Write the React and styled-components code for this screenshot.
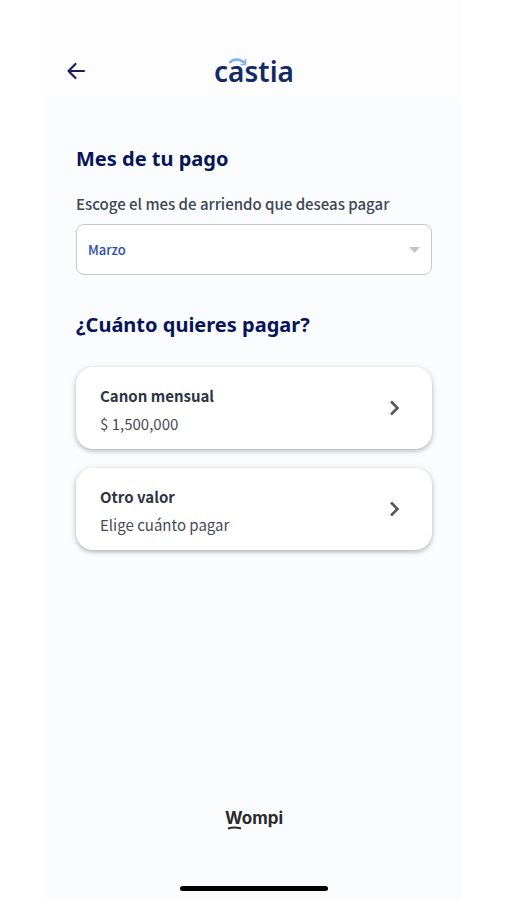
import React from "react";
import styled, { createGlobalStyle } from "styled-components";

const body = '"Noto Sans CJK SC", "Noto Sans", sans-serif';
const display = '"Noto Sans", "Open Sans", sans-serif';

const GlobalStyle = createGlobalStyle`
  *, *::before, *::after { box-sizing: border-box; }
  body { margin: 0; background: #fff; font-family: ${body}; color: #3d4756; }
`;

const Page = styled.div`
  min-height: 100vh;
  display: flex;
  padding: 0 45px 0 46px;
`;

const Screen = styled.div`
  flex: 1;
  min-width: 0;
  display: flex;
  flex-direction: column;
  background: #fafcfe;
`;

const Header = styled.header`
  display: grid;
  grid-template-columns: 40px 1fr 40px;
  align-items: center;
  padding: 44px 10px 0;
  height: 98px;
  background: #fdfdfe;
`;

const BackButton = styled.button`
  display: grid;
  place-items: center;
  width: 40px;
  height: 40px;
  padding: 0;
  border: 0;
  background: none;
  cursor: pointer;
`;

const Brand = styled.div`
  position: relative;
  justify-self: center;
  font: 600 28px/32px ${display};
  color: #142a64;
`;

const Swoosh = styled.svg`
  position: absolute;
  left: 14px;
  top: 2px;
`;

const Main = styled.main`
  flex: 1;
  display: flex;
  flex-direction: column;
  padding: 45px 30px 0;
`;

const Heading = styled.h2`
  margin: 0;
  font: 700 20px/32px ${display};
  color: #07145a;
`;

const Label = styled.label`
  margin-top: 17px;
  font-size: 15px;
  line-height: 24px;
  font-weight: 500;
`;

const SelectBox = styled.div`
  display: grid;
  align-items: center;
  margin: 8px 0 34px;
`;

const Select = styled.select`
  grid-area: 1 / 1;
  appearance: none;
  width: 100%;
  height: 51px;
  padding: 0 32px 0 11px;
  border: 1px solid #c9c9cb;
  border-radius: 8px;
  background: #fff;
  font: 500 13px/20px ${body};
  color: #2c4da8;
`;

const Caret = styled.svg`
  grid-area: 1 / 1;
  justify-self: end;
  margin-right: 12px;
  pointer-events: none;
`;

const Options = styled.div`
  display: grid;
  gap: 19px;
  margin-top: 26px;
`;

const OptionCard = styled.button`
  display: flex;
  align-items: center;
  justify-content: space-between;
  height: 82px;
  padding: 4px 30px 0 24px;
  border: 0;
  border-radius: 17px;
  background: #fff;
  box-shadow: 0 2px 4px rgba(0, 0, 0, 0.22), 0 1px 9px rgba(0, 0, 0, 0.1);
  font-family: ${body};
  text-align: left;
  color: #454c57;
  cursor: pointer;
`;

const OptionText = styled.span`
  display: grid;
  font-size: 15px;
  line-height: 28px;
`;

const OptionTitle = styled.strong`
  font-weight: 700;
  color: #2b3545;
`;

const Footer = styled.footer`
  display: flex;
  flex-direction: column;
  align-items: center;
  gap: 52px;
  padding-bottom: 9px;
`;

const Wompi = styled.div`
  position: relative;
  font: 700 17px/32px Inter, sans-serif;
  color: #2b2b2c;
`;

const Underline = styled.svg`
  position: absolute;
  left: 2px;
  top: 23px;
`;

const HomeBar = styled.div`
  width: 148px;
  height: 5px;
  border-radius: 3px;
  background: #000;
`;

function Option({ title, detail }) {
  return (
    <OptionCard type="button">
      <OptionText>
        <OptionTitle>{title}</OptionTitle>
        <span>{detail}</span>
      </OptionText>
      <svg width="14" height="20" viewBox="0 0 14 20" fill="none" aria-hidden="true">
        <path d="M3 1.500 9.500 8 3 14.500" stroke="#59595b" strokeWidth="2.6" />
      </svg>
    </OptionCard>
  );
}

export default function App() {
  return (
    <>
      <GlobalStyle />
      <Page>
        <Screen>
          <Header>
            <BackButton type="button" aria-label="Volver">
              <svg width="20" height="20" viewBox="0 0 20 20" fill="none" aria-hidden="true">
                <path
                  d="M18 10H2.500M9.500 3 2.500 10l7 7"
                  stroke="#18205c"
                  strokeWidth="2.2"
                  strokeLinecap="round"
                  strokeLinejoin="round"
                />
              </svg>
            </BackButton>
            <Brand>
              castia
              <Swoosh width="20" height="9" viewBox="0 0 20 9" fill="none" aria-hidden="true">
                <path d="M1.500 6C5 1.500 11 1.500 17 6" stroke="#82b3f0" strokeWidth="2.6" />
                <path d="M17.500 2v5.500h-5" stroke="#82b3f0" strokeWidth="1.6" />
              </Swoosh>
            </Brand>
          </Header>
          <Main>
            <Heading>Mes de tu pago</Heading>
            <Label htmlFor="month">Escoge el mes de arriendo que deseas pagar</Label>
            <SelectBox>
              <Select id="month" defaultValue="Marzo">
                <option>Marzo</option>
              </Select>
              <Caret width="11" height="6" viewBox="0 0 11 6" aria-hidden="true">
                <path d="M0 0h11L5.500 6z" fill="#c6c6c8" />
              </Caret>
            </SelectBox>
            <Heading>¿Cuánto quieres pagar?</Heading>
            <Options>
              <Option title="Canon mensual" detail="$ 1,500,000" />
              <Option title="Otro valor" detail="Elige cuánto pagar" />
            </Options>
          </Main>
          <Footer>
            <Wompi>
              Wompi
              <Underline width="15" height="5" viewBox="0 0 15 5" fill="none" aria-hidden="true">
                <path d="M1 3.500Q7 1.500 14 3.500" stroke="#2b2b2c" strokeWidth="2" />
              </Underline>
            </Wompi>
            <HomeBar />
          </Footer>
        </Screen>
      </Page>
    </>
  );
}
